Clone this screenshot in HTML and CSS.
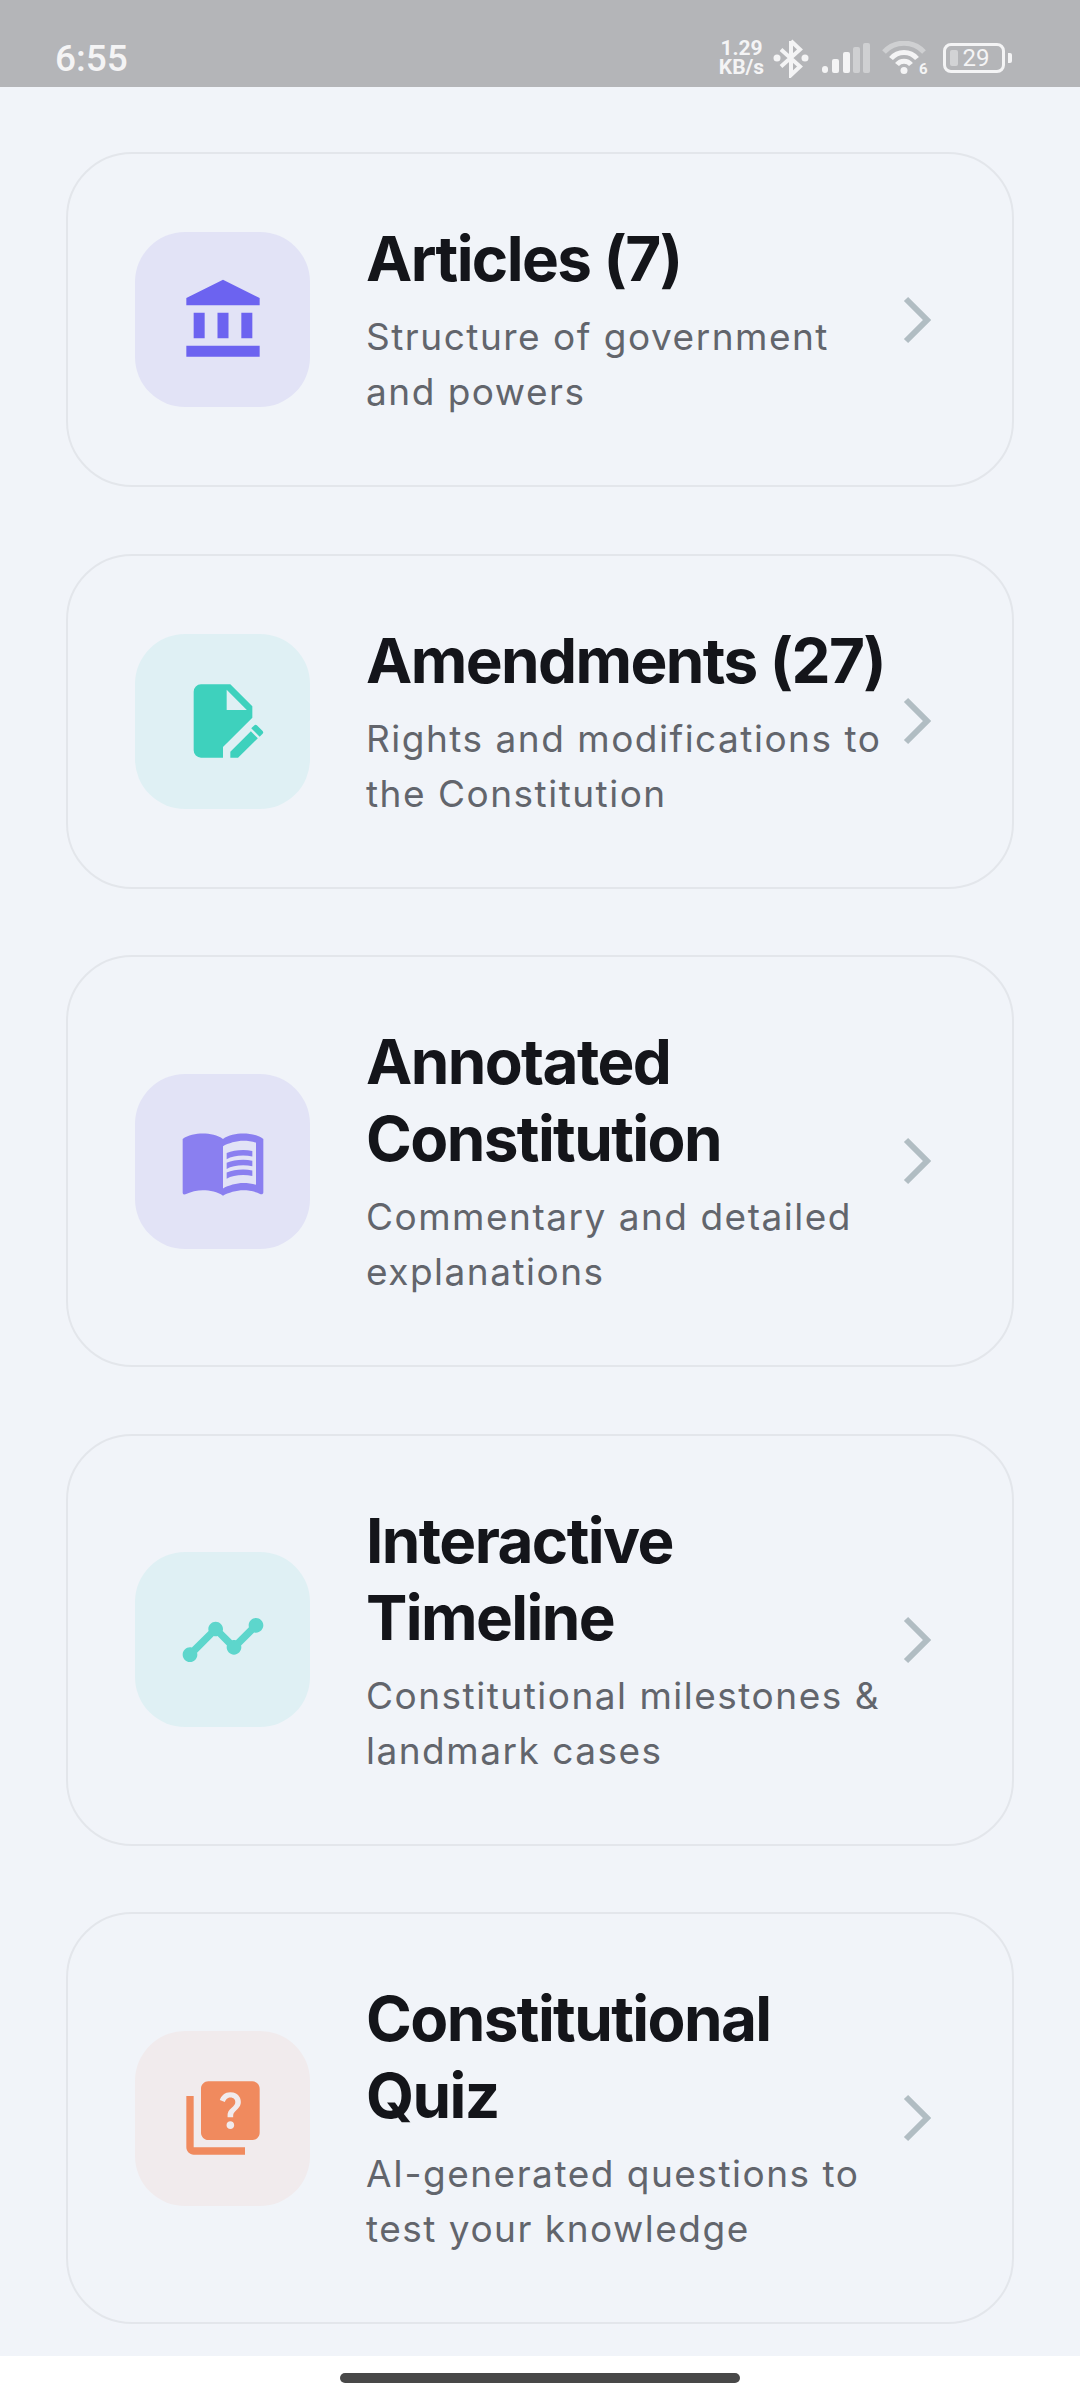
FILE: index.html
```html
<!DOCTYPE html>
<html lang="en">
<head>
  <meta charset="UTF-8" />
  <meta name="viewport" content="width=device-width, initial-scale=1.0"/>
  <title>Constitution</title>
  <link rel="stylesheet" href="styles.css">
</head>
<body>
  <div class="status-bar">
    <span class="time">6:55</span>
    <div class="status-icons">
      <div class="speed"><span>1.29</span><span>KB/s</span></div>
      <svg class="bt" width="36" height="40" viewBox="0 0 36 40">
        <path d="M18 3v34l9-8.500L8 11.500M18 3l9 8.500L8 28.500" fill="none" stroke="#f4f4f5" stroke-width="4"/>
        <circle cx="4" cy="20" r="3.500" fill="#f4f4f5"/>
        <circle cx="32" cy="20" r="3.500" fill="#f4f4f5"/>
      </svg>
      <svg class="signal" width="48" height="30" viewBox="0 0 48 30">
        <rect x="0" y="23" width="6" height="7" rx="3" fill="#f4f4f5"/>
        <rect x="10" y="16" width="7" height="14" rx="2" fill="#f4f4f5"/>
        <rect x="21" y="9" width="7" height="21" rx="2" fill="#f4f4f5"/>
        <rect x="31" y="4" width="7" height="26" rx="2" fill="#cfd0d2"/>
        <rect x="41" y="0" width="7" height="30" rx="2" fill="#cfd0d2"/>
      </svg>
      <svg class="wifi" width="48" height="40" viewBox="0 0 48 40">
        <path d="M2 11a27 27 0 0 1 40 0" fill="none" stroke="#cfd0d2" stroke-width="5"/>
        <path d="M9 17.500a17 17 0 0 1 26 0" fill="none" stroke="#f4f4f5" stroke-width="5"/>
        <path d="M15 23.500a9 9 0 0 1 14 0" fill="none" stroke="#f4f4f5" stroke-width="5"/>
        <circle cx="22" cy="29.500" r="3.500" fill="#f4f4f5"/>
        <text x="37" y="33" class="wifi-num">6</text>
      </svg>
      <div class="battery-wrap">
        <div class="battery"><span class="battery-fill"></span><span class="battery-num">29</span></div>
        <span class="battery-nub"></span>
      </div>
    </div>
  </div>

  <div class="list">
    <div class="card">
      <div class="icon-box box-purple">
        <svg class="icon" viewBox="0 0 24 24"><path fill="#6c63f0" d="M4 10h3v7H4zM10.500 10h3v7h-3zM2 19h20v3H2zM17 10h3v7h-3zM12 1L2 6v2h20V6z"/></svg>
      </div>
      <div class="text">
        <h2>Articles (7)</h2>
        <p>Structure of government<br>and powers</p>
      </div>
      <svg class="chevron" width="28" height="48" viewBox="0 0 28 48"><path d="M3 3l21 21L3 45" fill="none" stroke="#b1bdc3" stroke-width="6"/></svg>
    </div>

    <div class="card">
      <div class="icon-box box-teal">
        <svg class="icon" viewBox="0 0 24 24">
          <path fill="#3ed1bd" fill-rule="evenodd" d="M6 2h8l6 6v3.100l-8 8V22H6a2 2 0 0 1-2-2V4a2 2 0 0 1 2-2zM13 3.500V9h5.500z"/>
          <path fill="#3ed1bd" d="M14 22v-1.600l5.600-5.600 1.900 1.900L16.100 22zM20.500 13.200a.6.6 0 0 1 .8 0l1.500 1.500a.6.6 0 0 1 0 .8l-.8.8-2.300-2.300z"/>
        </svg>
      </div>
      <div class="text">
        <h2>Amendments (27)</h2>
        <p>Rights and modifications to the Constitution</p>
      </div>
      <svg class="chevron" width="28" height="48" viewBox="0 0 28 48"><path d="M3 3l21 21L3 45" fill="none" stroke="#b1bdc3" stroke-width="6"/></svg>
    </div>

    <div class="card">
      <div class="icon-box box-purple">
        <svg class="icon" viewBox="0 0 24 24">
          <path fill="#8a7ff0" d="M21 5c-1.110-.35-2.330-.5-3.500-.5-1.950 0-4.050.4-5.500 1.500-1.450-1.100-3.550-1.500-5.500-1.500S2.450 4.900 1 6v14.650c0 .25.25.5.5.5.1 0 .15-.05.25-.05C3.100 20.450 5.050 20 6.500 20c1.950 0 4.050.4 5.500 1.500 1.350-.85 3.800-1.500 5.500-1.500 1.650 0 3.350.3 4.750 1.050.1.05.15.05.25.05.25 0 .5-.25.5-.5V6c-.6-.45-1.250-.75-2-1zm0 13.500c-1.100-.35-2.300-.5-3.500-.5-1.700 0-4.150.65-5.500 1.500V8c1.350-.85 3.800-1.500 5.500-1.500 1.200 0 2.400.15 3.500.5v11.500z"/>
          <path fill="#8a7ff0" d="M17.500 10.500c.88 0 1.730.09 2.500.26V9.240c-.79-.15-1.640-.24-2.500-.24-1.700 0-3.240.29-4.500.83v1.660c1.130-.64 2.700-.99 4.500-.99zM13 12.490v1.660c1.130-.64 2.700-.99 4.500-.99.88 0 1.730.09 2.500.26V11.900c-.79-.15-1.640-.24-2.500-.24-1.700 0-3.240.3-4.500.83zM17.500 14.330c-1.700 0-3.240.29-4.500.83v1.660c1.130-.64 2.700-.99 4.500-.99.88 0 1.730.09 2.500.26v-1.520c-.79-.16-1.640-.24-2.500-.24z"/>
        </svg>
      </div>
      <div class="text">
        <h2>Annotated Constitution</h2>
        <p>Commentary and detailed explanations</p>
      </div>
      <svg class="chevron" width="28" height="48" viewBox="0 0 28 48"><path d="M3 3l21 21L3 45" fill="none" stroke="#b1bdc3" stroke-width="6"/></svg>
    </div>

    <div class="card">
      <div class="icon-box box-teal">
        <svg class="icon" viewBox="0 0 24 24"><path fill="#5dd6cc" d="M23 8c0 1.100-.9 2-2 2-.18 0-.35-.02-.51-.07l-3.560 3.550c.05.16.07.34.07.52 0 1.100-.9 2-2 2s-2-.9-2-2c0-.18.02-.36.07-.52l-2.550-2.550c-.16.05-.34.07-.52.07s-.36-.02-.52-.07l-4.550 4.560c.05.16.07.33.07.51 0 1.100-.9 2-2 2s-2-.9-2-2 .9-2 2-2c.18 0 .35.02.51.07l4.560-4.550C8.020 9.360 8 9.180 8 9c0-1.100.9-2 2-2s2 .9 2 2c0 .18-.02.36-.07.52l2.550 2.550c.16-.05.34-.07.52-.07s.36.02.52.07l3.550-3.560C19.020 8.350 19 8.180 19 8c0-1.100.9-2 2-2s2 .9 2 2z"/></svg>
      </div>
      <div class="text">
        <h2>Interactive Timeline</h2>
        <p>Constitutional milestones &amp; landmark cases</p>
      </div>
      <svg class="chevron" width="28" height="48" viewBox="0 0 28 48"><path d="M3 3l21 21L3 45" fill="none" stroke="#b1bdc3" stroke-width="6"/></svg>
    </div>

    <div class="card">
      <div class="icon-box box-orange">
        <svg class="icon" viewBox="0 0 24 24"><path fill="#f08a5e" d="M4 6H2v14c0 1.100.9 2 2 2h14v-2H4V6zm16-4H8c-1.100 0-2 .9-2 2v12c0 1.100.9 2 2 2h12c1.100 0 2-.9 2-2V4c0-1.100-.9-2-2-2zm-5.990 13c-.59 0-1.050-.47-1.050-1.050 0-.59.47-1.040 1.050-1.040.59 0 1.040.45 1.040 1.040-.01.58-.45 1.050-1.040 1.050zm2.500-6.170c-.63.93-1.230 1.210-1.560 1.810-.13.24-.18.4-.18 1.180h-1.520c0-.41-.06-1.080.26-1.650.41-.73 1.180-1.160 1.630-1.800.48-.68.21-1.940-1.140-1.940-.88 0-1.320.67-1.500 1.230l-1.370-.57C11.510 5.960 12.520 5 13.990 5c1.230 0 2.080.56 2.510 1.260.37.61.58 1.730.01 2.570z"/></svg>
      </div>
      <div class="text">
        <h2>Constitutional Quiz</h2>
        <p>AI-generated questions to test your knowledge</p>
      </div>
      <svg class="chevron" width="28" height="48" viewBox="0 0 28 48"><path d="M3 3l21 21L3 45" fill="none" stroke="#b1bdc3" stroke-width="6"/></svg>
    </div>
  </div>

  <div class="nav-bar"><div class="handle"></div></div>
</body>
</html>
```

FILE: styles.css
```css
* {
  box-sizing: border-box;
}

html,
body {
  margin: 0;
  height: 2400px;
  overflow: hidden;
}

body {
  font-family: Inter, "Liberation Sans", sans-serif;
  background: #f1f4f9;
  display: flex;
  flex-direction: column;
}

.status-bar {
  height: 87px;
  background: #b4b5b8;
  color: #f4f4f5;
  font-family: Roboto, sans-serif;
  display: flex;
  align-items: center;
  justify-content: space-between;
  padding: 29px 68px 0 55px;
}

.time {
  font-size: 37px;
  font-weight: 500;
}

.status-icons {
  display: flex;
  align-items: center;
}

.speed {
  display: flex;
  flex-direction: column;
  align-items: center;
  font-size: 21px;
  font-weight: 700;
  line-height: 19px;
  width: 43px;
}

.bt {
  margin-left: 10px;
}

.signal {
  margin-left: 13px;
}

.wifi {
  margin-left: 12px;
  margin-top: 6px;
}

.wifi-num {
  font-size: 15px;
  font-weight: 700;
  fill: #f4f4f5;
}

.battery-wrap {
  display: flex;
  align-items: center;
  gap: 3px;
  margin-left: 13px;
}

.battery {
  position: relative;
  width: 62px;
  height: 30px;
  border: 3px solid #f4f4f5;
  border-radius: 8px;
  display: flex;
  align-items: center;
  justify-content: center;
}

.battery-fill {
  position: absolute;
  left: 4px;
  top: 4px;
  bottom: 4px;
  width: 8px;
  background: #d2d3d5;
  border-radius: 2px;
}

.battery-num {
  font-size: 24px;
  line-height: 24px;
  margin-left: 4px;
}

.battery-nub {
  width: 4px;
  height: 10px;
  background: #f4f4f5;
  border-radius: 0 2px 2px 0;
}

.list {
  flex: 1;
  display: flex;
  flex-direction: column;
  gap: 66.5px;
  padding: 65px 66px 0;
}

.card {
  display: flex;
  align-items: center;
  border: 2px solid #e3e6eb;
  border-radius: 66px;
  padding: 66px 0 66px 67px;
}

.icon-box {
  width: 175px;
  height: 175px;
  flex-shrink: 0;
  border-radius: 50px;
  display: flex;
  align-items: center;
  justify-content: center;
}

.box-purple {
  background: #e2e3f6;
}

.box-teal {
  background: #dff0f4;
}

.box-orange {
  background: #f1ebed;
}

.icon {
  width: 88px;
  height: 88px;
}

.text {
  width: 536px;
  margin-left: 56px;
  flex-shrink: 0;
}

.text h2 {
  margin: 0 0 12px;
  font-size: 62px;
  font-weight: 700;
  line-height: 77px;
  letter-spacing: -1.6px;
  color: #14151a;
}

.text p {
  margin: 0;
  font-size: 37px;
  font-weight: 400;
  line-height: 55px;
  letter-spacing: 1.5px;
  color: #62656c;
}

.chevron {
  margin-left: 1px;
}

.nav-bar {
  height: 44px;
  background: #fff;
  display: flex;
  justify-content: center;
  padding-top: 17px;
}

.handle {
  width: 400px;
  height: 10px;
  background: #484848;
  border-radius: 5px;
}
```
